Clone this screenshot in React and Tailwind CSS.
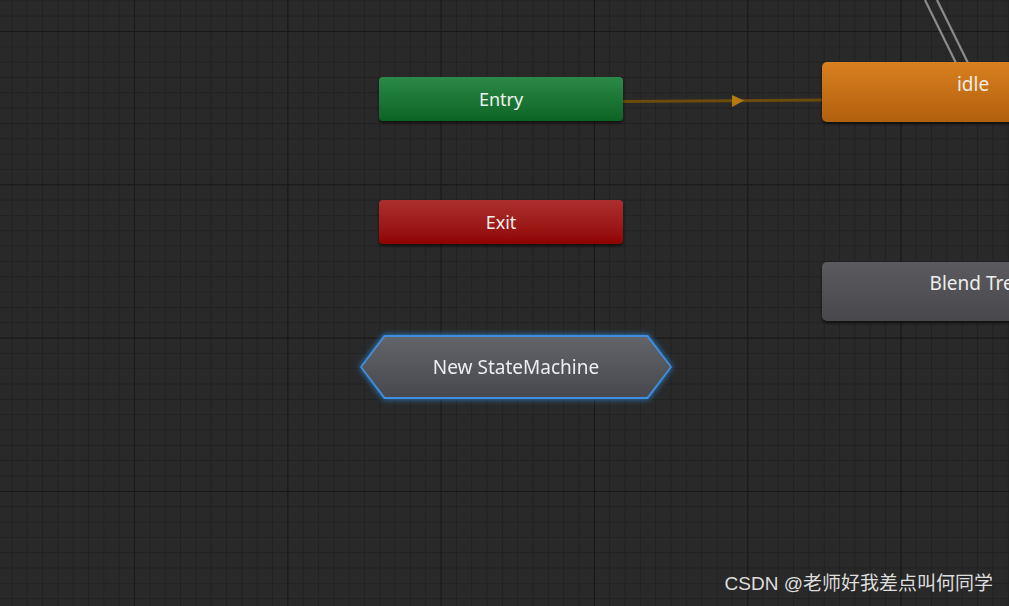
export default function App() {
  return (
    <div className="relative w-[1009px] h-[606px] overflow-hidden bg-[#292929] font-['Noto_Sans','Open_Sans',sans-serif]">
      {/* grid */}
      <div className="absolute inset-0 [background-image:linear-gradient(to_right,#181818_1px,transparent_1px),linear-gradient(to_bottom,#181818_1px,transparent_1px),linear-gradient(to_right,#212121_1px,transparent_1px),linear-gradient(to_bottom,#212121_1px,transparent_1px)] [background-size:153.33px_153.33px,153.33px_153.33px,15.333px_15.333px,15.333px_15.333px] [background-position:134px_31px,134px_31px,134px_31px,134px_31px]" />

      {/* transitions */}
      <svg className="absolute inset-0" width="1009" height="606">
        <line x1="623" y1="101.5" x2="822" y2="100" stroke="#6b4a0c" strokeWidth="3" />
        <polygon points="732,95 744,100.5 732,107" fill="#b37a12" />
        <line x1="925" y1="0" x2="956" y2="63" stroke="#8c8c8c" strokeWidth="2.2" />
        <line x1="937" y1="0" x2="968" y2="63" stroke="#8c8c8c" strokeWidth="2.2" />
      </svg>

      {/* Entry */}
      <div className="absolute left-[379px] top-[77px] w-[244px] h-[44px] rounded-[4px] bg-gradient-to-b from-[#2b8a47] to-[#0b6424] shadow-[0_2px_3px_rgba(0,0,0,0.6)] flex items-center justify-center text-[18px] text-[#eef2ee]">
        Entry
      </div>

      {/* Exit */}
      <div className="absolute left-[379px] top-[200px] w-[244px] h-[44px] rounded-[4px] bg-gradient-to-b from-[#ad2e2e] to-[#8f0202] shadow-[0_2px_3px_rgba(0,0,0,0.6)] flex items-center justify-center text-[18px] text-[#f2eeee]">
        Exit
      </div>

      {/* idle */}
      <div className="absolute left-[822px] top-[62px] w-[302px] h-[60px] rounded-[5px] bg-gradient-to-b from-[#d9801f] to-[#b2600e] shadow-[0_2px_3px_rgba(0,0,0,0.6)] flex items-center justify-center pb-[16px] text-[19px] text-[#f3ece4]">
        idle
      </div>

      {/* Blend Tree */}
      <div className="absolute left-[822px] top-[262px] w-[310px] h-[59px] rounded-[5px] bg-gradient-to-b from-[#5b5b5f] to-[#48484c] shadow-[0_2px_3px_rgba(0,0,0,0.6)] flex items-center justify-center pb-[16px] text-[19px] text-[#eeeeee]">
        Blend Tree
      </div>

      {/* New StateMachine */}
      <div className="absolute left-[360px] top-[335px] w-[312px] h-[64px] drop-shadow-[0_0_3px_#2f86d8]">
        <div className="w-full h-full bg-[#3f8fe0] [clip-path:polygon(24px_0,288px_0,312px_50%,288px_100%,24px_100%,0_50%)] p-[2px]">
          <div className="w-full h-full bg-gradient-to-b from-[#63646a] to-[#48494e] [clip-path:polygon(23px_0,285px_0,308px_50%,285px_100%,23px_100%,0_50%)] flex items-center justify-center text-[19px] text-[#eceef2]">
            New StateMachine
          </div>
        </div>
      </div>

      {/* watermark */}
      <div className="absolute right-[16px] bottom-[8px] text-[19px] text-[#dedede] font-['Liberation_Sans','Noto_Sans_CJK_SC',sans-serif]">
        CSDN @老师好我差点叫何同学
      </div>
    </div>
  );
}
